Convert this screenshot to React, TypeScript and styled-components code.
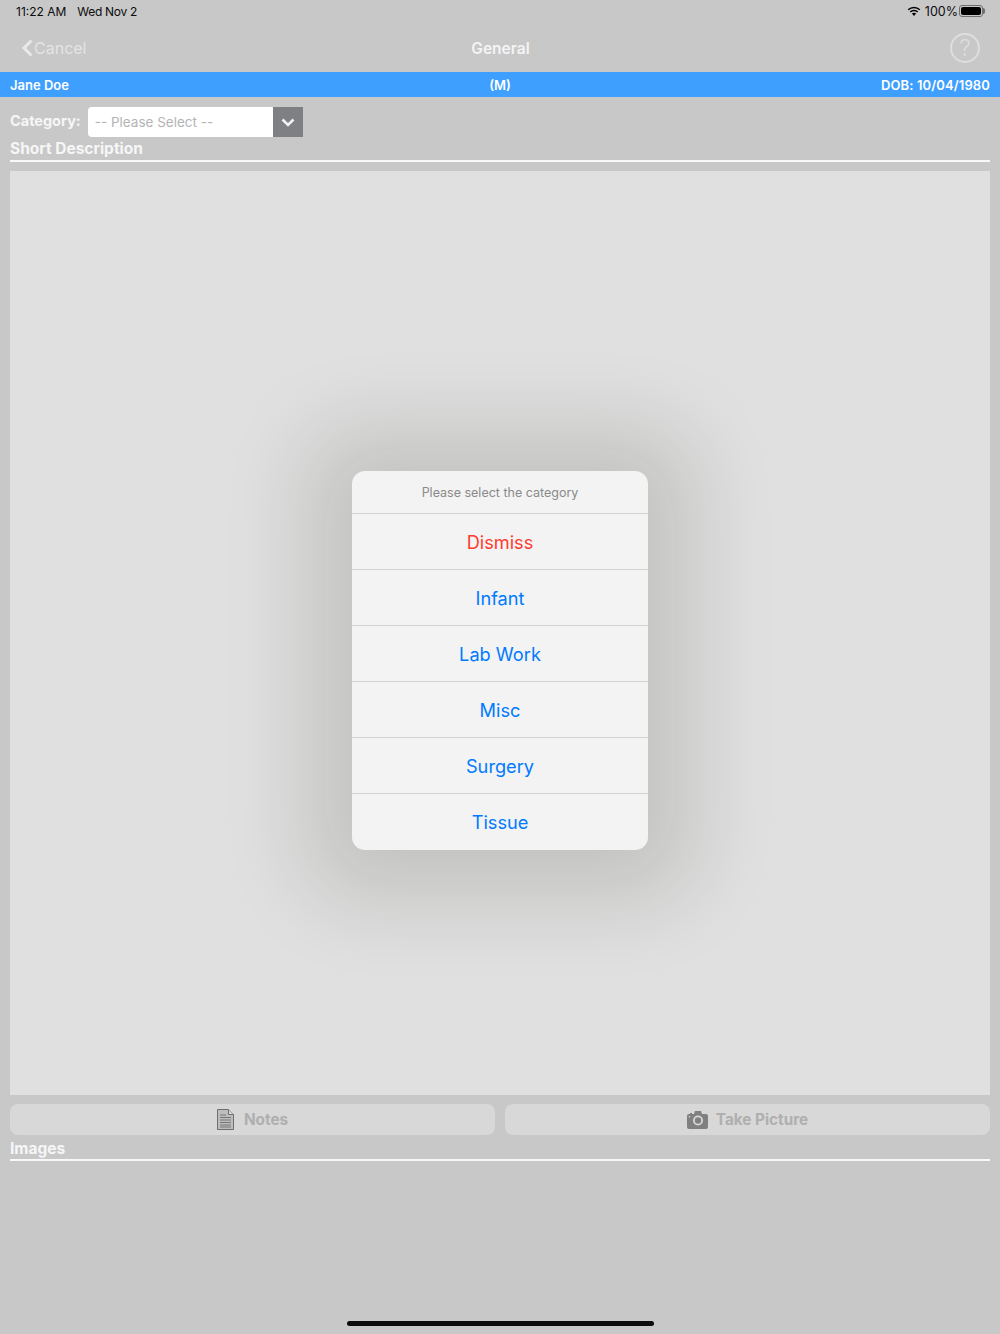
import styled, { createGlobalStyle } from 'styled-components';

const OPTIONS = ['Dismiss', 'Infant', 'Lab Work', 'Misc', 'Surgery', 'Tissue'];

const App = () => {
  return (
    <Page>
      <GlobalStyle />
      <StatusBar>
        <StatusLeft>
          <span>11:22 AM</span>
          <StatusDate>Wed Nov 2</StatusDate>
        </StatusLeft>
        <StatusRight>
          <svg width="14" height="11" viewBox="0 0 14 11">
            <path d="M7 2.200c2 0 3.900.8 5.300 2.100l1-1.100A9.300 9.300 0 0 0 7 .7 9.300 9.300 0 0 0 .7 3.200l1 1.100A7.800 7.800 0 0 1 7 2.200z" fill="#000" />
            <path d="M7 5.200c1.200 0 2.300.4 3.200 1.200l1-1.100A6.200 6.200 0 0 0 7 3.700a6.200 6.200 0 0 0-4.200 1.600l1 1.100A4.800 4.800 0 0 1 7 5.200z" fill="#000" />
            <path d="M7 6.800c-.8 0-1.500.3-2.100.8L7 10l2.100-2.400A3.200 3.200 0 0 0 7 6.800z" fill="#000" />
          </svg>
          <span>100%</span>
          <Battery>
            <BatteryFill />
          </Battery>
        </StatusRight>
      </StatusBar>

      <NavBar>
        <BackButton>
          <svg width="13" height="18" viewBox="0 0 13 18">
            <path d="M10.500 1.500 3 9l7.500 7.500" fill="none" stroke="#e9e9e9" strokeWidth="3" />
          </svg>
          <span>Cancel</span>
        </BackButton>
        <NavTitle>General</NavTitle>
        <HelpButton>?</HelpButton>
      </NavBar>

      <PatientBar>
        <span>Jane Doe</span>
        <PatientSex>(M)</PatientSex>
        <PatientDob>DOB: 10/04/1980</PatientDob>
      </PatientBar>

      <Content>
        <CategoryRow>
          <FieldLabel>Category:</FieldLabel>
          <SelectBox>
            <SelectText>-- Please Select --</SelectText>
            <SelectArrow>
              <svg width="14" height="9" viewBox="0 0 14 9">
                <path d="M1.500 1.500 7 7l5.500-5.500" fill="none" stroke="#f2f2f2" strokeWidth="2.600" />
              </svg>
            </SelectArrow>
          </SelectBox>
        </CategoryRow>

        <SectionTitle>Short Description</SectionTitle>
        <DescriptionArea />

        <ButtonRow>
          <ActionButton $gap={10}>
            <svg width="17" height="21" viewBox="0 0 17 21">
              <path d="M.5.500h11l5 5v15H.5z" fill="#bdbdbd" stroke="#6f6f6f" />
              <path d="M11.500.500v5h5" fill="#d8d8d8" stroke="#6f6f6f" />
              <path d="M3 6h6M3 8.500h11M3 11h11M3 13.500h11M3 16h11M3 18h11" stroke="#777" strokeWidth="1" />
            </svg>
            <span>Notes</span>
          </ActionButton>
          <ActionButton $gap={8}>
            <svg width="21" height="18" viewBox="0 0 21 18">
              <path
                fillRule="evenodd"
                d="M2 3h1V2h2v1h2l1-3h6l1 3h4a2 2 0 0 1 2 2v11a2 2 0 0 1-2 2H2a2 2 0 0 1-2-2V5a2 2 0 0 1 2-2zm9 1.500a5 5 0 1 0 0 10 5 5 0 0 0 0-10zm0 1.800a3.200 3.200 0 1 1 0 6.400 3.200 3.200 0 0 1 0-6.400zM2.500 5a.8.8 0 1 0 0 1.600.8.8 0 0 0 0-1.600z"
                fill="#808080"
              />
            </svg>
            <span>Take Picture</span>
          </ActionButton>
        </ButtonRow>

        <ImagesTitle>Images</ImagesTitle>
      </Content>

      <HomeIndicator />

      <Overlay>
        <Sheet>
          <SheetTitle>Please select the category</SheetTitle>
          {OPTIONS.map((option) => (
            <SheetOption key={option} $danger={option === 'Dismiss'}>
              {option}
            </SheetOption>
          ))}
        </Sheet>
      </Overlay>
    </Page>
  );
};

export default App;

const GlobalStyle = createGlobalStyle`
  html, body {
    margin: 0;
    padding: 0;
    background: #c8c8c8;
  }
  * {
    box-sizing: border-box;
  }
`;

const Page = styled.div`
  position: relative;
  display: flex;
  flex-direction: column;
  width: 1000px;
  height: 1334px;
  overflow: hidden;
  background: #c8c8c8;
  font-family: Inter, 'Liberation Sans', sans-serif;
`;

const StatusBar = styled.div`
  display: flex;
  align-items: center;
  justify-content: space-between;
  height: 24px;
  padding: 0 17px 2px 16px;
  color: #0c0c0c;
  font-size: 12px;
  font-weight: 400;
`;

const StatusLeft = styled.div`
  display: flex;
  gap: 11px;
`;

const StatusDate = styled.span`
  letter-spacing: -0.3px;
`;

const StatusRight = styled.div`
  display: flex;
  align-items: center;
  gap: 2px;
  font-size: 12.500px;

  svg {
    margin-right: 2px;
  }
`;

const Battery = styled.div`
  position: relative;
  display: flex;
  width: 24px;
  height: 12px;
  margin-left: -1px;
  padding: 1px;
  border: 1px solid #6e6e6e;
  border-radius: 3px;

  &::after {
    content: '';
    position: absolute;
    top: 2px;
    right: -3px;
    width: 2px;
    height: 6px;
    background: #6e6e6e;
    border-radius: 0 2px 2px 0;
  }
`;

const BatteryFill = styled.div`
  flex: 1;
  background: #000;
  border-radius: 2px;
`;

const NavBar = styled.div`
  display: grid;
  grid-template-columns: 1fr auto 1fr;
  align-items: center;
  height: 48px;
  padding: 0 20px 0 21px;
`;

const BackButton = styled.div`
  display: flex;
  align-items: center;
  color: #e4e4e4;
  font-size: 16px;
`;

const NavTitle = styled.div`
  color: #f4f4f4;
  font-size: 15.500px;
  font-weight: 600;
`;

const HelpButton = styled.div`
  display: flex;
  align-items: center;
  justify-content: center;
  justify-self: end;
  width: 30px;
  height: 30px;
  border: 2px solid #dedede;
  border-radius: 50%;
  color: #dedede;
  font-size: 23px;
  font-weight: 300;
`;

const PatientBar = styled.div`
  display: grid;
  grid-template-columns: 1fr auto 1fr;
  align-items: center;
  height: 25px;
  padding: 0 10px;
  background: #3f9fff;
  color: #fff;
  font-size: 13px;
  font-weight: 600;
`;

const PatientSex = styled.span`
  justify-self: center;
`;

const PatientDob = styled.span`
  justify-self: end;
  letter-spacing: 0.12px;
`;

const Content = styled.div`
  display: flex;
  flex: 1;
  flex-direction: column;
  padding: 10px 10px 0;
`;

const CategoryRow = styled.div`
  display: flex;
  align-items: center;
  gap: 7px;
  height: 30px;
`;

const FieldLabel = styled.div`
  margin-top: -3px;
  color: #f6f6f6;
  font-size: 14.500px;
  font-weight: 700;
`;

const SelectBox = styled.div`
  display: flex;
  width: 215px;
  height: 30px;
  background: #fff;
  border-radius: 4px 0 0 4px;
`;

const SelectText = styled.div`
  display: flex;
  flex: 1;
  align-items: center;
  padding-left: 7px;
  color: #b4b4b4;
  font-size: 13.500px;
`;

const SelectArrow = styled.div`
  display: flex;
  align-items: center;
  justify-content: center;
  width: 30px;
  background: #7f8083;
`;

const SectionTitle = styled.div`
  height: 23px;
  margin-top: 2px;
  border-bottom: 2px solid #f8f8f8;
  color: #f6f6f6;
  font-size: 15.500px;
  font-weight: 700;
`;

const DescriptionArea = styled.div`
  height: 924px;
  margin-top: 9px;
  background: #e0e0e0;
`;

const ButtonRow = styled.div`
  display: grid;
  grid-template-columns: 1fr 1fr;
  gap: 10px;
  margin-top: 9px;
`;

const ActionButton = styled.div<{ $gap: number }>`
  display: flex;
  align-items: center;
  justify-content: center;
  gap: ${(props) => props.$gap}px;
  height: 31px;
  background: #d8d8d8;
  border-radius: 8px;
  color: #afafaf;
  font-size: 15.300px;
  font-weight: 700;
`;

const ImagesTitle = styled(SectionTitle)`
  height: 23px;
  margin-top: 3px;
  padding-top: 1px;
`;

const HomeIndicator = styled.div`
  flex: none;
  align-self: center;
  width: 307px;
  height: 5px;
  margin-bottom: 8px;
  background: #0c0c0c;
  border-radius: 3px;
`;

const Overlay = styled.div`
  position: absolute;
  inset: 0;
  display: flex;
  align-items: flex-start;
  justify-content: center;
  padding-top: 471px;
`;

const Sheet = styled.div`
  display: flex;
  flex-direction: column;
  width: 296px;
  padding-bottom: 1px;
  background: #f3f3f3;
  border-radius: 13px;
  box-shadow: 0 4px 85px 45px rgba(20, 20, 0, 0.14);
  overflow: hidden;
`;

const SheetTitle = styled.div`
  display: flex;
  align-items: center;
  justify-content: center;
  height: 42px;
  color: #8a8a8a;
  font-size: 12.500px;
`;

const SheetOption = styled.div<{ $danger?: boolean }>`
  display: flex;
  align-items: center;
  justify-content: center;
  height: 56px;
  padding-top: 1px;
  border-top: 1px solid #d2d2d2;
  color: ${(props) => (props.$danger ? '#ff3b30' : '#007aff')};
  font-size: 18.200px;
`;
